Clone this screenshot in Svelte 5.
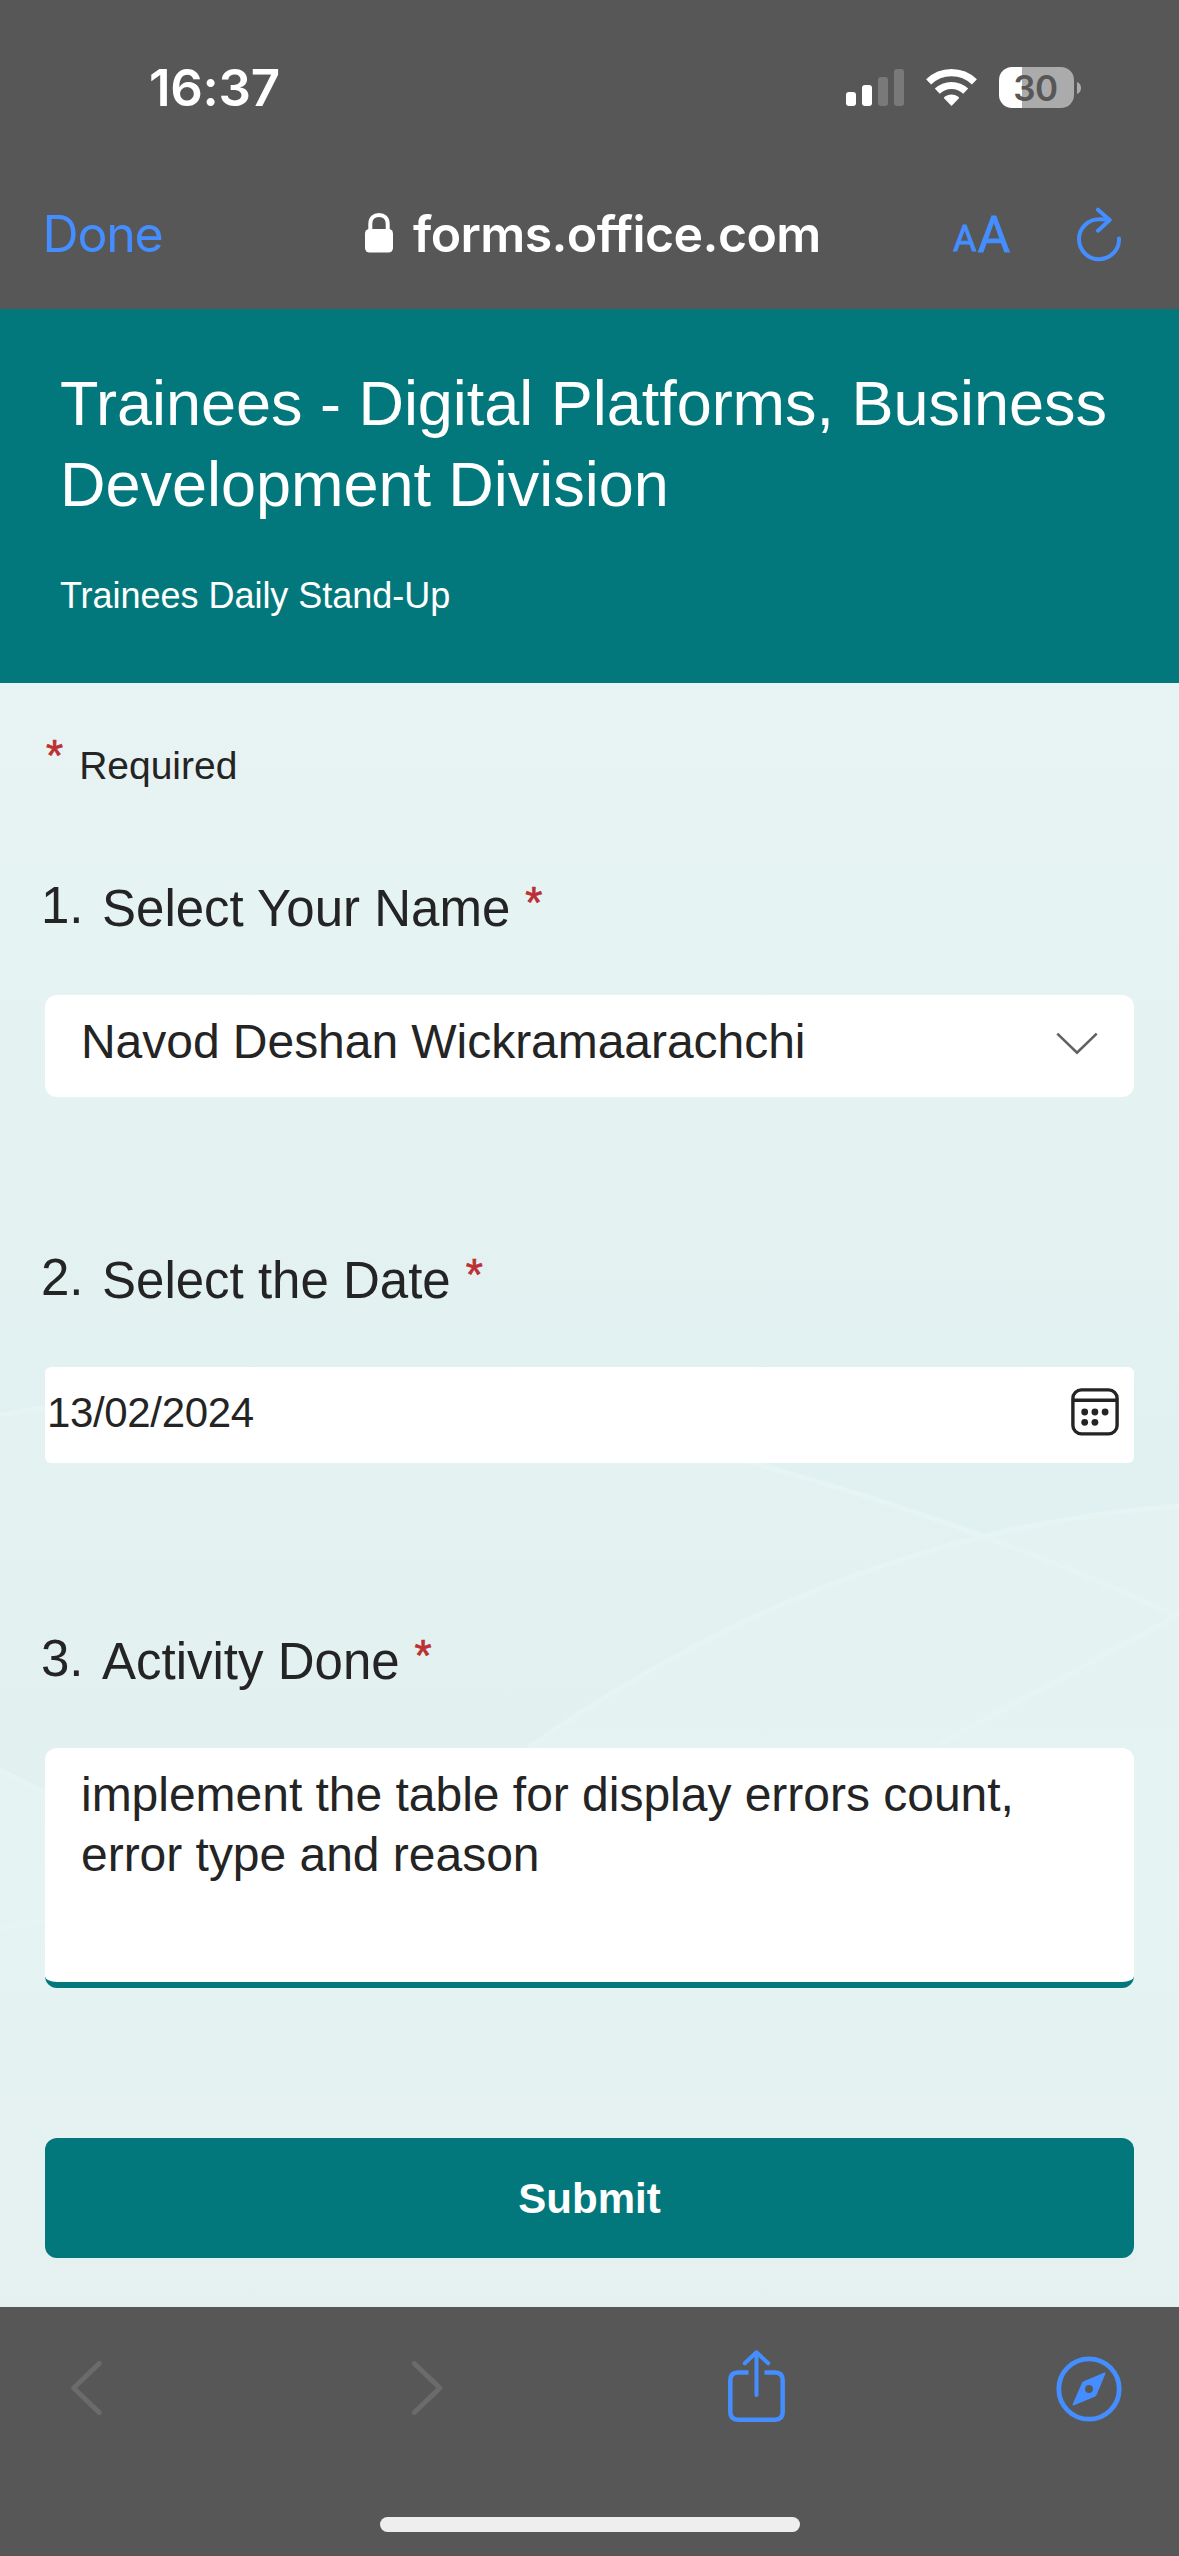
<script>
  const person = 'Navod Deshan Wickramaarachchi';
  const date = '13/02/2024';
  const bars = [
    { x: 0, y: 25, on: true },
    { x: 16, y: 18, on: true },
    { x: 32, y: 10, on: false },
    { x: 48, y: 2, on: false }
  ];
</script>

{#snippet heading(number, label)}
  <div class="heading">
    <span class="number">{number}.</span>
    <span class="label">{label}</span>
    <span class="star">*</span>
  </div>
{/snippet}

<div class="screen">
  <header class="chrome">
    <div class="status">
      <span class="time">16:37</span>
      <div class="indicators">
        <svg width="58" height="41" viewBox="0 0 58 41">
          {#each bars as b}
            <rect x={b.x} y={b.y} width="10" height={39 - b.y} rx="3" fill={b.on ? '#fff' : '#797979'} />
          {/each}
        </svg>
        <svg width="51" height="41" viewBox="0 0 51 41" fill="none" stroke="#fff">
          <path d="M2.6 14.8A33 33 0 0 1 48.4 14.8" stroke-width="7.2" />
          <path d="M11.3 24.2A20.5 20.5 0 0 1 39.7 24.2" stroke-width="7.2" />
          <path d="M25.5 39L18.3 31.6Q17.6 30.6 18.6 29.8Q25.5 25.2 32.4 29.8Q33.4 30.6 32.7 31.6Z" fill="#fff" stroke="none" />
        </svg>
        <div class="battery">
          <span class="cell">30</span>
          <svg width="4" height="12" viewBox="0 0 4 12"><path d="M0 0Q4 1.5 4 6T0 12Z" fill="#ababab" /></svg>
        </div>
      </div>
    </div>
    <nav class="address">
      <span class="done">Done</span>
      <div class="site">
        <svg width="28" height="40" viewBox="0 0 28 40">
          <rect x="0" y="16" width="28" height="23.500" rx="4.500" fill="#fff" />
          <path d="M5.300 18V11C5.300 5 9 2 14 2S22.700 5 22.700 11V18" fill="none" stroke="#fff" stroke-width="4" />
        </svg>
        <span class="domain">forms.office.com</span>
      </div>
      <span class="size"><span class="small">A</span><span class="large">A</span></span>
      <svg class="reload" width="46" height="56" viewBox="0 0 46 56" fill="none" stroke="#458eff" stroke-width="4" stroke-linecap="round" stroke-linejoin="round">
        <path d="M42 31.500A20 20 0 1 1 22 12.300Q27 11.900 32.400 12.900" />
        <path d="M21 2.700L32.600 13L21 23.700" />
      </svg>
    </nav>
  </header>

  <section class="banner">
    <h1>Trainees - Digital Platforms, Business<br />Development Division</h1>
    <p>Trainees Daily Stand-Up</p>
  </section>

  <main class="form">
    <svg class="waves" width="1179" height="1624" viewBox="0 683 1179 1624">
      <defs>
        <linearGradient id="base" x1="0" y1="683" x2="0" y2="1480" gradientUnits="userSpaceOnUse">
          <stop offset="0" stop-color="#e8f3f3" />
          <stop offset="0.3" stop-color="#e6f3f3" />
          <stop offset="1" stop-color="#e1f0f0" />
        </linearGradient>
        <linearGradient id="mid" x1="0" y1="1400" x2="0" y2="1750" gradientUnits="userSpaceOnUse">
          <stop offset="0" stop-color="#e5f2f2" />
          <stop offset="1" stop-color="#e2f0f0" />
        </linearGradient>
        <linearGradient id="low" x1="0" y1="1500" x2="0" y2="2307" gradientUnits="userSpaceOnUse">
          <stop offset="0" stop-color="#e5f2f2" />
          <stop offset="0.5" stop-color="#e6f3f3" />
          <stop offset="1" stop-color="#e5f1f1" />
        </linearGradient>
      </defs>
      <rect y="683" width="1179" height="1624" fill="url(#base)" />
      <path d="M0 1415Q400 1340 752 1463Q981 1525 1179 1617V2307H0Z" fill="url(#mid)" />
      <path d="M0 1770L45 1793L528 1748Q840 1530 1179 1506V2307H0Z" fill="url(#low)" />
      <g fill="none" stroke="#e7f4f4" stroke-width="5">
        <path d="M0 1415Q400 1340 752 1463Q981 1525 1179 1617" />
        <path d="M528 1748Q840 1530 1179 1506" />
        <path d="M939 1744Q1060 1680 1179 1614" />
        <path d="M0 1770L60 1800M0 1928L60 1918" />
      </g>
    </svg>

    <div class="required"><span class="star">*</span><span>Required</span></div>

    <div class="question">
      {@render heading(1, 'Select Your Name')}
      <div class="field select">
        <span>{person}</span>
        <svg width="42" height="24" viewBox="0 0 42 24" fill="none" stroke="#616161" stroke-width="2.600"><path d="M1.300 1.600L21 20.800L40.700 1.600" /></svg>
      </div>
    </div>

    <div class="question second">
      {@render heading(2, 'Select the Date')}
      <div class="field date">
        <span>{date}</span>
        <svg width="48" height="48" viewBox="0 0 48 48" fill="none" stroke="#242424" stroke-width="3.400">
          <rect x="1.900" y="1.900" width="44.200" height="44" rx="8.500" />
          <path d="M2 12.300H46" />
          <g fill="#242424" stroke="none">
            <circle cx="13.700" cy="24" r="3.400" /><circle cx="23.900" cy="24" r="3.400" /><circle cx="34.100" cy="24" r="3.400" />
            <circle cx="13.700" cy="34.300" r="3.400" /><circle cx="23.900" cy="34.300" r="3.400" />
          </g>
        </svg>
      </div>
    </div>

    <div class="question third">
      {@render heading(3, 'Activity Done')}
      <div class="field answer">implement the table for display errors count,<br />error type and reason</div>
    </div>

    <button class="submit">Submit</button>
  </main>

  <footer class="toolbar">
    <div class="tools">
      <svg width="32" height="54" viewBox="0 0 32 54" fill="none" stroke="#6b6b6b" stroke-width="5" stroke-linecap="round" stroke-linejoin="round"><path d="M29.200 2.500L3.700 27L29.200 51.500" /></svg>
      <svg width="32" height="54" viewBox="0 0 32 54" fill="none" stroke="#6b6b6b" stroke-width="5" stroke-linecap="round" stroke-linejoin="round"><path d="M3.300 2.500L28.800 27L3.300 51.500" /></svg>
      <svg width="57" height="72" viewBox="0 0 57 72" fill="none" stroke="#458eff" stroke-width="4.500" stroke-linecap="round" stroke-linejoin="round">
        <path d="M20.500 22.500H10Q2.300 22.500 2.300 30.500V62Q2.300 69.700 10 69.700H47Q54.700 69.700 54.700 62V30.500Q54.700 22.500 47 22.500H36.500" stroke-linecap="butt" />
        <path d="M28.500 2.500V45M16.800 13.300L28.500 2.300L40.200 13.300" stroke-width="4" />
      </svg>
      <svg width="66" height="66" viewBox="0 0 66 66">
        <circle cx="33" cy="33" r="30.200" fill="none" stroke="#458eff" stroke-width="4.800" />
        <path fill-rule="evenodd" fill="#458eff" stroke="#458eff" stroke-width="1.500" stroke-linejoin="round" d="M48.800 17.300L40 38.500Q39.500 39.500 38.500 40L17.200 48.800L26.500 27.500Q27 26.500 28 26ZM33 28.300A4.700 4.700 0 1 0 33 37.700A4.700 4.700 0 1 0 33 28.300Z" />
      </svg>
    </div>
    <div class="home"></div>
  </footer>
</div>

<style>
  :global(body) { margin: 0; background: #575757; }
  .screen {
    position: relative;
    z-index: 0;
    width: 1179px;
    height: 2556px;
    display: flex;
    flex-direction: column;
    overflow: hidden;
    font-family: 'Liberation Sans', Arial, sans-serif;
    color: #242424;
    white-space: nowrap;
  }
  svg { display: block; flex: none; }
  .chrome {
    height: 309px;
    flex: none;
    background: #575757;
    color: #fff;
    font-family: Inter, sans-serif;
  }
  .status {
    height: 118px;
    padding: 58px 98px 0 149px;
    display: flex;
    justify-content: space-between;
    align-items: flex-start;
  }
  .time { font-size: 51px; line-height: 60px; font-weight: 600; letter-spacing: -0.3px; }
  .indicators { display: flex; gap: 22px; padding-top: 9px; }
  .battery { display: flex; align-items: center; gap: 3px; }
  .cell {
    width: 75px;
    height: 41px;
    border-radius: 13px;
    background: linear-gradient(90deg, #fff 23px, #ababab 23px);
    color: #575757;
    font-size: 35px;
    line-height: 42px;
    font-weight: 600;
    letter-spacing: -0.5px;
    text-align: center;
    box-sizing: border-box;
    padding-right: 2px;
  }
  .address {
    display: grid;
    grid-template-columns: 323px 588px 124px 46px;
    padding: 28px 0 0 42px;
    align-items: start;
    line-height: 61px;
  }
  .done { color: #458eff; font-size: 50px; letter-spacing: -1.2px; padding-left: 0.5px; }
  .site { display: flex; gap: 20px; }
  .site svg { margin-top: 9px; }
  .domain { font-size: 50px; font-weight: 600; letter-spacing: -0.6px; font-variant-ligatures: none; }
  .size { color: #458eff; display: flex; gap: 3px; font-family: Roboto, sans-serif; -webkit-text-stroke: 0.8px #458eff; }
  .small { font-size: 36px; letter-spacing: -2px; line-height: 70px; }
  .large { font-size: 50px; line-height: 63px; letter-spacing: -1px; }
  .reload { margin-top: 3px; }

  .banner {
    height: 374px;
    flex: none;
    box-sizing: border-box;
    padding: 54px 58px 0 60px;
    background: #03787c;
    color: #fff;
  }
  h1 { margin: 0; font-size: 63px; line-height: 81px; font-weight: 400; letter-spacing: -0.03px; }
  .banner p { margin: 49px 0 0; font-size: 36px; line-height: 44px; letter-spacing: -0.03px; }

  .form {
    position: relative;
    height: 1624px;
    flex: none;
    box-sizing: border-box;
    padding: 61px 45px 0;
  }
  .waves { position: absolute; left: 0; top: 0; z-index: -1; }
  .required { display: flex; height: 44px; gap: 16px; font-size: 39px; line-height: 44px; }
  .star { color: #bc2f32; -webkit-text-stroke: 0.7px #bc2f32; }
  .required .star { font-size: 44px; line-height: 23px; padding-left: 1px; }
  .question { margin-top: 91px; }
  .second { margin-top: 154px; }
  .third { margin-top: 169px; }
  .heading { display: flex; height: 59px; font-size: 51px; line-height: 60px; margin-left: -4px; }
  .number { width: 61px; line-height: 54px; }
  .heading .star { margin-left: 15px; font-size: 44px; line-height: 48px; }
  .field {
    box-sizing: border-box;
    margin-top: 57px;
    background: #fff;
    border-radius: 12px;
    display: flex;
    justify-content: space-between;
  }
  .select { height: 102px; padding: 17px 36px 0 36px; font-size: 48px; line-height: 60px; letter-spacing: -0.04px; }
  .select svg { margin-top: 20px; }
  .date { height: 96px; border-radius: 6px; padding: 21px 15px 0 2px; font-size: 42px; line-height: 50px; letter-spacing: -0.35px; }
  .answer {
    height: 240px;
    padding: 17px 36px 0;
    font-size: 48px;
    line-height: 60px;
    letter-spacing: -0.02px;
    display: block;
    border-bottom: 6px solid #03787c;
  }
  .submit {
    display: block;
    width: 100%;
    height: 120px;
    margin-top: 150px;
    padding: 1px 0 0;
    border: 0;
    border-radius: 12px;
    background: #03787c;
    color: #fff;
    font: 700 42px/119px 'Liberation Sans', Arial, sans-serif;
  }

  .toolbar { height: 249px; background: #575757; display: flex; flex-direction: column; align-items: center; }
  .tools {
    width: 100%;
    height: 168px;
    box-sizing: border-box;
    padding: 43px 57px 0 70px;
    display: grid;
    grid-template-columns: 341px 317px 1fr 66px;
    align-items: start;
  }
  .tools svg { margin-top: 11px; }
  .tools svg:nth-child(3) { margin-top: 0; }
  .tools svg:nth-child(4) { margin-top: 6px; }
  .home { width: 420px; height: 15px; margin-top: 42px; border-radius: 8px; background: #eee; }
</style>
